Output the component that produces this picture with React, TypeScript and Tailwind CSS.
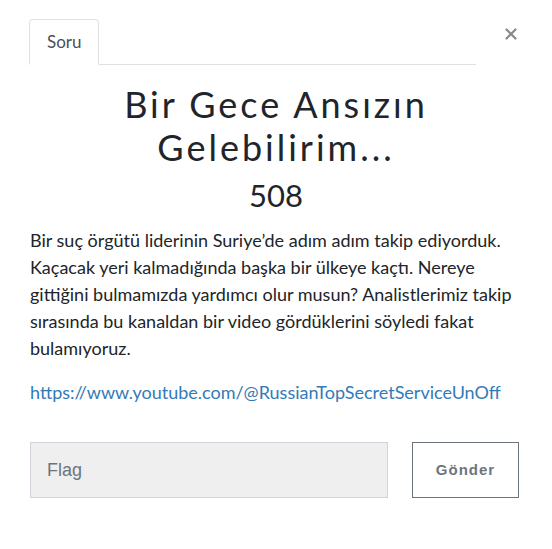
import { X } from "lucide-react";

const body = "font-['Lato','Liberation_Sans',sans-serif]";

export default function App() {
  return (
    <div className="min-h-screen bg-white">
      <div className="relative px-[30px] pt-[19px]">
        <button className="absolute right-[32px] top-[25px] text-[#8a8a8a]" aria-label="Kapat">
          <X size={18} strokeWidth={3} />
        </button>

        <div className="mr-[46px] flex border-b border-[#dee2e6]">
          <div className="-mb-px ml-[-1px] rounded-t-[4px] border border-b-white border-[#dee2e6] bg-white px-[17px] py-[10px]">
            <span className={`${body} text-[17px] leading-[24px] text-[#495057]`}>Soru</span>
          </div>
        </div>

        <div className="pt-[18px] text-center">
          <h2 className="font-['Lato',sans-serif] text-[36px] font-normal leading-[43px] tracking-[3px] text-[#212529]">
            Bir Gece Ansızın
            <br />
            Gelebilirim...
          </h2>
          <h3 className={`${body} mt-[6px] text-[31px] leading-[40px] text-[#212529]`}>508</h3>
        </div>

        <div className={`${body} mt-[12px] text-[18px] leading-[27px] text-[#212529]`}>
          <p>
            Bir suç örgütü liderinin Suriye’de adım adım takip ediyorduk. Kaçacak yeri kalmadığında başka bir ülkeye
            kaçtı. Nereye gittiğini bulmamızda yardımcı olur musun? Analistlerimiz takip sırasında bu kanaldan bir
            video gördüklerini söyledi fakat bulamıyoruz.
          </p>
          <p className="mt-[17px]">
            <a href="#" className="text-[#337ab7]">
              https://www.youtube.com/@RussianTopSecretServiceUnOff
            </a>
          </p>
        </div>

        <div className="mt-[36px] flex gap-[24px] pr-[3px]">
          <input
            placeholder="Flag"
            className="h-[56px] w-[358px] border border-[#ced4da] bg-[#efefef] px-[16px] font-['Liberation_Sans',sans-serif] text-[18px] text-[#495057] placeholder:text-[#6c757d] outline-none"
          />
          <button className="h-[56px] w-[107px] border border-[#6c757d] bg-white font-['Liberation_Sans',sans-serif] text-[15px] font-bold tracking-[1px] text-[#6c757d]">
            Gönder
          </button>
        </div>
      </div>
    </div>
  );
}
